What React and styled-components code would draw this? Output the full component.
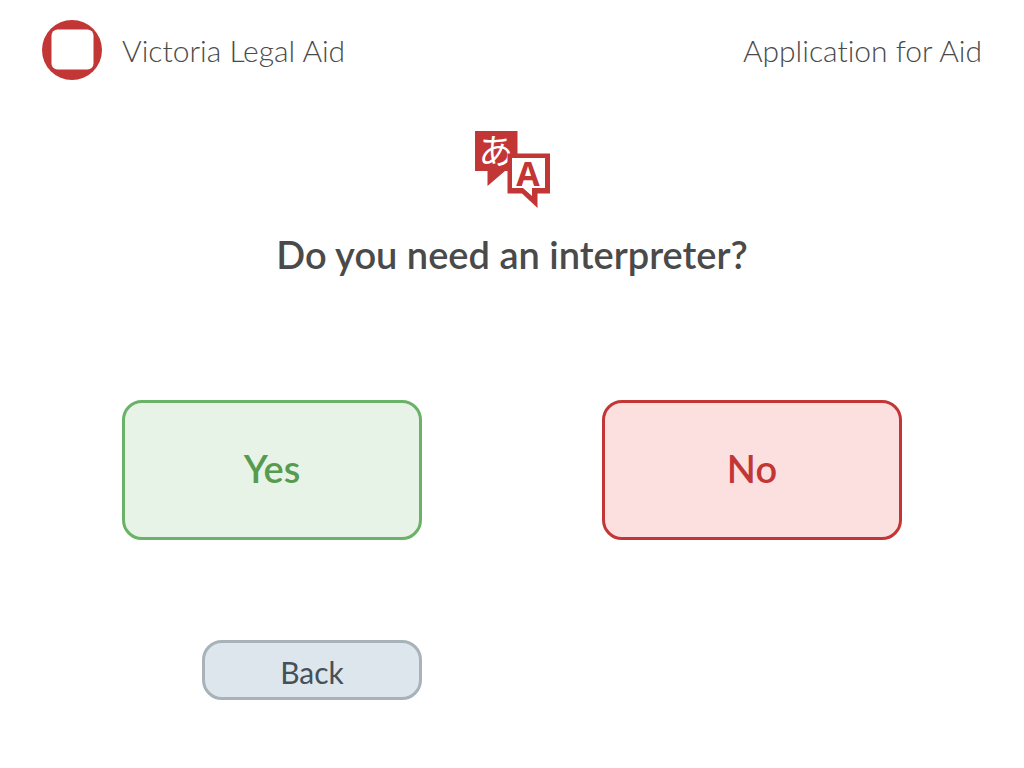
import React from "react";
import styled, { createGlobalStyle } from "styled-components";

const red = "#c23635";

const GlobalStyle = createGlobalStyle`
  * { box-sizing: border-box; }
  body {
    margin: 0;
    background: #fff;
    color: #4a4a4a;
    font-family: "Avenir Next", Avenir, Lato, sans-serif;
    font-variant-ligatures: none;
  }
`;

const Header = styled.header`
  display: flex;
  align-items: center;
  justify-content: space-between;
  gap: 20px;
  padding: 20px 42px;
  font-size: 30px;
  line-height: 60px;
  font-weight: 300;
`;

const Brand = styled.div`
  display: flex;
  align-items: center;
  gap: 20px;
`;

const Logo = styled.svg`
  width: 60px;
  height: 60px;
`;

const Main = styled.main`
  display: flex;
  flex-direction: column;
  align-items: center;
  padding: 30px 40px 68px;
`;

const TranslateIcon = styled.svg`
  width: 76px;
  height: 78px;
`;

const Question = styled.h1`
  margin: 22px 0 122px;
  font-size: 38px;
  line-height: 48px;
  font-weight: 600;
  text-align: center;
`;

const Choices = styled.form`
  display: grid;
  grid-template-columns: 1fr 1fr;
  column-gap: 180px;
  row-gap: 100px;
  width: 100%;
  max-width: 780px;
`;

const Button = styled.button`
  border: 3px solid;
  border-radius: 20px;
  padding: 0;
  font-family: inherit;
  cursor: pointer;
`;

const ChoiceButton = styled(Button)`
  height: 140px;
  padding-bottom: 4px;
  font-size: 38px;
  line-height: 48px;
  font-weight: 600;
  color: ${(p) => (p.$positive ? "#569b50" : red)};
  border-color: ${(p) => (p.$positive ? "#6ab267" : red)};
  background: ${(p) => (p.$positive ? "#e7f3e6" : "#fce0e0")};
`;

const BackButton = styled(Button)`
  justify-self: end;
  width: 220px;
  height: 60px;
  padding-top: 4px;
  font-size: 30px;
  line-height: 36px;
  font-weight: 400;
  color: #455058;
  border-color: #a7b3b9;
  background: #dce6ec;
`;

export default function App() {
  return (
    <>
      <GlobalStyle />
      <Header>
        <Brand>
          <Logo viewBox="0 0 60 60" aria-hidden="true">
            <circle cx="30" cy="30" r="30" fill={red} />
            <rect x="9.5" y="9.5" width="42" height="40" rx="6" fill="#fff" />
          </Logo>
          <span>Victoria Legal Aid</span>
        </Brand>
        <span>Application for Aid</span>
      </Header>
      <Main>
        <TranslateIcon viewBox="0 0 76 78" aria-hidden="true">
          <path d="M1 1H43.5V41H31L13.500 56V41H1Z" fill={red} />
          <text x="22" y="34" textAnchor="middle" fontFamily="'Noto Sans CJK JP', sans-serif" fontSize="35" fill="#fff">あ</text>
          <path d="M33.500 23.500H76V63.500H63.500V78L48 63.500H33.500Z" fill={red} />
          <path d="M38 28H71V58H58V66L49 58H38Z" fill="#fff" />
          <text x="54" y="56" textAnchor="middle" fontFamily="'Open Sans', sans-serif" fontWeight="700" fontSize="34" fill={red}>A</text>
        </TranslateIcon>
        <Question>Do you need an interpreter?</Question>
        <Choices onSubmit={(e) => e.preventDefault()}>
          <ChoiceButton type="submit" $positive>Yes</ChoiceButton>
          <ChoiceButton type="submit">No</ChoiceButton>
          <BackButton type="button">Back</BackButton>
        </Choices>
      </Main>
    </>
  );
}
